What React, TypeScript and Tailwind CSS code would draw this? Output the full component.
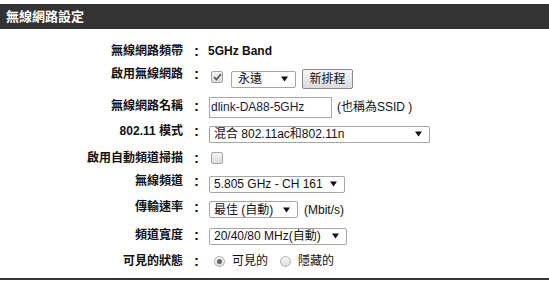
import React from "react";

const FONT = { fontFamily: '"Liberation Sans", "Noto Sans CJK TC", sans-serif' };

function Arrow() {
  return (
    <svg width="7" height="6" viewBox="0 0 7 6" className="shrink-0">
      <path d="M0 0.5 L7 0.5 L3.5 5.5 Z" fill="#111" />
    </svg>
  );
}

function Select({ w, text }: { w: string; text: string }) {
  return (
    <div
      className={`${w} h-[17px] border border-[#a6a6a6] rounded-[2px] bg-white flex items-center justify-between pl-[4px] pr-[7px] text-[12px] text-[#111] leading-none`}
    >
      <span className="whitespace-nowrap">{text}</span>
      <Arrow />
    </div>
  );
}

function Check({ checked }: { checked?: boolean }) {
  return (
    <div className="w-[12px] h-[12px] border border-[#a3a3a3] rounded-[2px] bg-gradient-to-b from-[#f4f4f4] to-[#dcdcdc] flex items-center justify-center">
      {checked && (
        <svg width="9" height="8" viewBox="0 0 9 8">
          <path d="M1 4.2 L3.5 6.5 L8 1" stroke="#5a5a5a" strokeWidth="1.8" fill="none" />
        </svg>
      )}
    </div>
  );
}

function Radio({ checked }: { checked?: boolean }) {
  return (
    <div className="w-[11px] h-[11px] rounded-full border border-[#b0b0b0] bg-gradient-to-b from-[#f6f6f6] to-[#dedede] flex items-center justify-center">
      {checked && <div className="w-[5px] h-[5px] rounded-full bg-[#666]" />}
    </div>
  );
}

function Row({
  label,
  h,
  pb,
  children,
}: {
  label: string;
  h: string;
  pb: string;
  children: React.ReactNode;
}) {
  return (
    <div className={`flex items-center ${h}`}>
      <div className={`w-[200px] flex justify-end items-center font-bold text-[12px] text-[#111] leading-[14px] ${pb}`}>
        <span className="whitespace-nowrap">{label}</span>
        <span className="w-[17px] text-right pr-[1px] text-[15px] leading-[14px] font-bold">:</span>
      </div>
      <div className="pl-[9px] flex items-center text-[12px] text-[#111]">{children}</div>
    </div>
  );
}

export default function App() {
  return (
    <div className="w-[549px] h-[284px] bg-white pt-[4px] overflow-hidden" style={FONT}>
      <div className="h-[25px] bg-[#333333] text-white font-bold text-[13px] pl-[6px] flex items-center">
        無線網路設定
      </div>
      <div className="pt-[9px]">
        <Row label="無線網路頻帶" h="h-[26px]" pb="pb-0">
          <span className="font-bold text-[12px] -ml-[1px]">5GHz Band</span>
        </Row>
        <Row label="啟用無線網路" h="h-[29px]" pb="pb-[9px]">
          <div className="flex items-center">
            <div className="ml-[2px] -mt-[3px]">
              <Check checked />
            </div>
            <div className="ml-[8px] mt-[1px]">
              <div className="w-[65px] h-[17px] border border-[#a6a6a6] rounded-[2px] bg-white flex items-center justify-between pl-[6px] pr-[7px] text-[12px] leading-none">
                <span>永遠</span>
                <Arrow />
              </div>
            </div>
            <button className="ml-[6px] w-[51px] h-[20px] border border-[#8a8a8a] rounded-[2px] bg-gradient-to-b from-[#f6f6f6] to-[#dcdcdc] text-[12px] leading-none text-[#111]">
              新排程
            </button>
          </div>
        </Row>
        <Row label="無線網路名稱" h="h-[28px]" pb="pb-[3px]">
          <div className="w-[123px] h-[21px] border border-[#a9a9a9] bg-white flex items-center pl-[1px] text-[12px] text-[#1a1a40] leading-none">
            dlink-DA88-5GHz
          </div>
          <span className="ml-[5px] text-[12px]">(也稱為SSID )</span>
        </Row>
        <Row label="802.11 模式" h="h-[26px]" pb="pb-[6px]">
          <Select w="w-[221px]" text="混合 802.11ac和802.11n" />
        </Row>
        <Row label="啟用自動頻道掃描" h="h-[22px]" pb="pb-[1px]">
          <div className="ml-[2px]">
            <Check />
          </div>
        </Row>
        <Row label="無線頻道" h="h-[30px]" pb="pb-[6px]">
          <Select w="w-[136px]" text="5.805 GHz - CH 161" />
        </Row>
        <Row label="傳輸速率" h="h-[21px]" pb="pb-[5px]">
          <Select w="w-[89px]" text="最佳 (自動)" />
          <span className="ml-[6px] text-[12px]">(Mbit/s)</span>
        </Row>
        <Row label="頻道寬度" h="h-[32px]" pb="pb-[2px]">
          <Select w="w-[138px]" text="20/40/80 MHz(自動)" />
        </Row>
        <Row label="可見的狀態" h="h-[18px]" pb="pb-0">
          <div className="flex items-center">
            <div className="ml-[5px]">
              <Radio checked />
            </div>
            <span className="ml-[7px]">可見的</span>
            <div className="ml-[12px]">
              <Radio />
            </div>
            <span className="ml-[7px]">隱藏的</span>
          </div>
        </Row>
      </div>
      <div className="mt-[8px] h-[2px] bg-[#333333]" />
    </div>
  );
}
